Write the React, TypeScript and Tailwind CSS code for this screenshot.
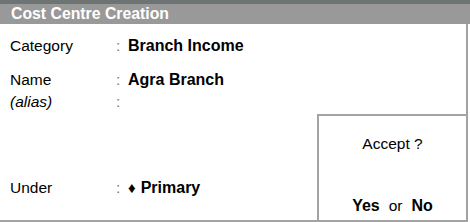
const font = { fontFamily: '"Liberation Sans", Arial, sans-serif' };

type Field = {
  label: string;
  value: string;
  italic?: boolean;
  diamond?: boolean;
  className: string;
};

const fields: Field[] = [
  { label: "Category", value: "Branch Income", className: "mt-[12px]" },
  { label: "Name", value: "Agra Branch", className: "mt-[14px]" },
  { label: "(alias)", value: "", italic: true, className: "mt-[2px]" },
  { label: "Under", value: "Primary", diamond: true, className: "mt-[66px]" },
];

export default function App() {
  return (
    <div
      className="flex h-[222px] w-[470px] flex-col bg-white text-black"
      style={font}
    >
      <div className="h-[4px] bg-[#6e7373]" />
      <div className="flex h-[20px] items-center bg-[#999999] pl-[11px] text-[15.8px] font-bold text-white">
        Cost Centre Creation
      </div>

      <div className="flex h-[198px] w-[468px] border-r-2 border-b-2 border-[#a3a3a3]">
        <div className="flex flex-1 flex-col">
          {fields.map((field) => (
            <div
              key={field.label}
              className={`flex h-[20px] items-center text-[15.5px] ${field.className}`}
            >
              <span
                className={`w-[116px] pl-[10px] ${field.italic ? "italic" : ""}`}
              >
                {field.label}
              </span>
              <span className="w-[12px] text-[#777]">:</span>
              {field.diamond && (
                <span className="mr-[5px] text-[15px]">♦</span>
              )}
              <span className="text-[16px] font-bold">{field.value}</span>
            </div>
          ))}
        </div>

        <div className="flex w-[149px] flex-col justify-end">
          <div className="flex h-[106px] flex-col items-center border-t-2 border-l-2 border-[#a3a3a3] text-[15.5px]">
            <div className="mt-[18px] h-[20px] leading-[20px]">Accept ?</div>
            <div className="mt-[42px] h-[20px] leading-[20px]">
              <span className="text-[16px] font-bold">Yes</span>
              <span className="mx-[9px]">or</span>
              <span className="text-[16px] font-bold">No</span>
            </div>
          </div>
        </div>
      </div>
    </div>
  );
}
